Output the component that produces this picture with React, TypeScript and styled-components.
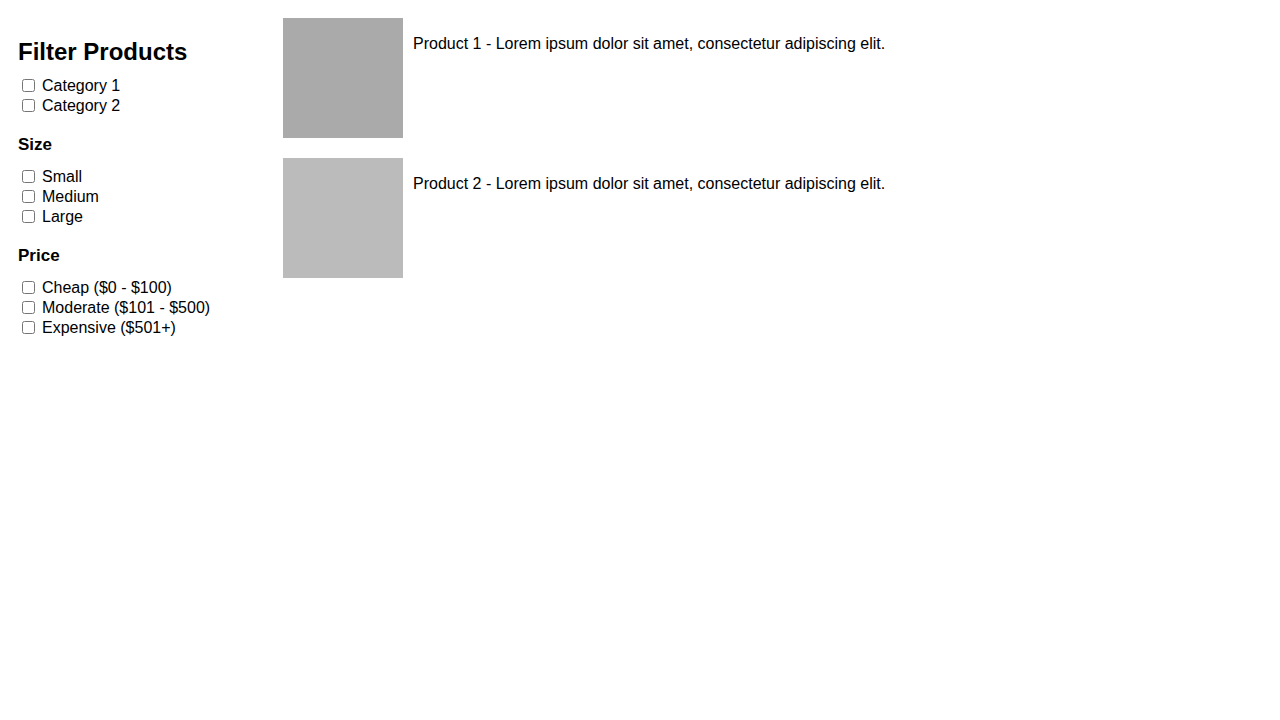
import React from "react";
import styled, { createGlobalStyle } from "styled-components";

const Global = createGlobalStyle`
  html, body { margin: 0; padding: 0; background: #fff; }
  body { font-family: "Liberation Sans", Arial, sans-serif; color: #000; font-size: 16px; }
`;

const Page = styled.div`
  display: flex;
  align-items: flex-start;
`;

const Sidebar = styled.aside`
  width: 230px;
  flex: none;
  padding: 18px;
`;

const Title = styled.h2`
  font-size: 24px;
  font-weight: bold;
  margin: 20px 0 10px;
  line-height: 28px;
`;

const Group = styled.div`
  margin-bottom: 18px;
`;

const GroupTitle = styled.h3`
  font-size: 17px;
  font-weight: bold;
  margin: 0 0 12px;
  line-height: 21px;
`;

const Option = styled.label`
  display: flex;
  align-items: center;
  height: 20px;
  font-size: 16px;
`;

const Box = styled.input`
  margin: 0 7px 1px 4px;
  width: 13px;
  height: 13px;
`;

const Main = styled.main`
  flex: 1;
  padding: 18px 0 0 17px;
  display: flex;
  flex-direction: column;
  gap: 20px;
`;

const Product = styled.div`
  display: flex;
  align-items: flex-start;
`;

const Thumb = styled.div<{ $shade: string }>`
  width: 120px;
  height: 120px;
  flex: none;
  background: ${(p) => p.$shade};
`;

const Desc = styled.p`
  margin: 17px 0 0 10px;
  font-size: 16px;
  line-height: 18px;
`;

const groups = [
  { title: "Size", items: ["Small", "Medium", "Large"] },
  { title: "Price", items: ["Cheap ($0 - $100)", "Moderate ($101 - $500)", "Expensive ($501+)"] },
];

export default function App() {
  return (
    <>
      <Global />
      <Page>
        <Sidebar>
          <Title>Filter Products</Title>
          <Group>
            <Option><Box type="checkbox" />Category 1</Option>
            <Option><Box type="checkbox" />Category 2</Option>
          </Group>
          {groups.map((g) => (
            <Group key={g.title}>
              <GroupTitle>{g.title}</GroupTitle>
              {g.items.map((i) => (
                <Option key={i}><Box type="checkbox" />{i}</Option>
              ))}
            </Group>
          ))}
        </Sidebar>
        <Main>
          <Product>
            <Thumb $shade="#aaaaaa" />
            <Desc>Product 1 - Lorem ipsum dolor sit amet, consectetur adipiscing elit.</Desc>
          </Product>
          <Product>
            <Thumb $shade="#bbbbbb" />
            <Desc>Product 2 - Lorem ipsum dolor sit amet, consectetur adipiscing elit.</Desc>
          </Product>
        </Main>
      </Page>
    </>
  );
}
